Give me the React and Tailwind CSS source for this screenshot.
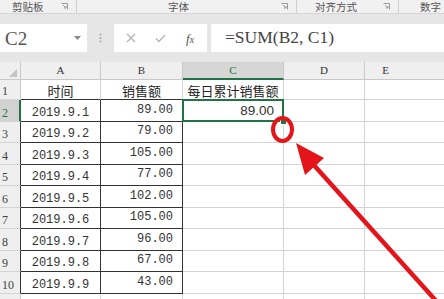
import React from "react";

const dates = ["2019.9.1","2019.9.2","2019.9.3","2019.9.4","2019.9.5","2019.9.6","2019.9.7","2019.9.8","2019.9.9"];
const sales = ["89.00","79.00","105.00","77.00","102.00","105.00","96.00","67.00","43.00"];
const heights = ["h-[22px]","h-[21px]","h-[22px]","h-[21px]","h-[22px]","h-[21px]","h-[22px]","h-[21px]","h-[22px]"];

const mono = { fontFamily: '"Liberation Mono", "Noto Sans CJK SC", monospace' };
const serif = { fontFamily: '"Liberation Serif", "Noto Sans CJK SC", serif' };
const cjk = { fontFamily: '"Noto Sans CJK SC", "Noto Sans", sans-serif' };
const sans = { fontFamily: '"Liberation Sans", Arial, sans-serif' };

function Launcher() {
  return (
    <svg width="7" height="7" viewBox="0 0 7 7" className="shrink-0">
      <path d="M0.5 0.5 H6.5 V6.5" fill="none" stroke="#9a9a9a" strokeWidth="1" />
      <path d="M2 2 L5 5 M5 3 V5 H3" fill="none" stroke="#9a9a9a" strokeWidth="1" />
    </svg>
  );
}

function RowHeader({ n, dark, selected }) {
  return (
    <div
      className={`w-[21px] shrink-0 h-full flex items-end pl-[2px] pb-[2px] text-[12px] leading-none border-b border-b-[#d4d4d4] ${
        selected ? "bg-[#d2d2d2] text-[#217346] border-r-2 border-r-[#217346]" : "bg-[#efefef] text-[#444]"
      } ${!selected && dark ? "border-r border-r-[#333]" : ""} ${!selected && !dark ? "border-r border-r-[#c8c8c8]" : ""}`}
      style={serif}
    >
      {n}
    </div>
  );
}

export default function App() {
  return (
    <div className="relative w-[444px] h-[299px] overflow-hidden bg-white select-none">
      {/* ribbon group labels */}
      <div className="h-[14px] bg-[#f1f1f1] border-b border-[#d6d6d6] flex items-center text-[10.5px] leading-[12px] text-[#555]" style={cjk}>
        <div className="w-[77px] shrink-0 flex items-center justify-between pl-[12px] pr-[8px] border-r border-[#cfcfcf] h-[13px]">
          <span>剪贴板</span>
          <Launcher />
        </div>
        <div className="w-[220px] shrink-0 flex items-center justify-between pl-[91px] pr-[8px] border-r border-[#cfcfcf] h-[13px]">
          <span>字体</span>
          <Launcher />
        </div>
        <div className="w-[102px] shrink-0 flex items-center justify-between pl-[18px] pr-[8px] border-r border-[#cfcfcf] h-[13px]">
          <span>对齐方式</span>
          <Launcher />
        </div>
        <div className="flex-1 pl-[21px] flex items-center h-[13px]">
          <span>数字</span>
        </div>
      </div>

      {/* formula bar area */}
      <div className="h-[48px] bg-[#e6e6e6] pt-[10px] flex items-start">
        <div className="w-[87px] h-[28px] bg-white flex items-center justify-between pl-[5px] pr-[6px]">
          <span className="text-[19px] leading-none text-[#555]" style={serif}>C2</span>
          <svg width="7" height="5" viewBox="0 0 7 5"><path d="M0 0 H7 L3.5 4 Z" fill="#888" /></svg>
        </div>
        <div className="w-[27px] h-[28px] flex items-center justify-center">
          <svg width="3" height="10" viewBox="0 0 3 10">
            <circle cx="1.5" cy="1.5" r="1" fill="#a8a8a8" />
            <circle cx="1.5" cy="5" r="1" fill="#a8a8a8" />
            <circle cx="1.5" cy="8.5" r="1" fill="#a8a8a8" />
          </svg>
        </div>
        <div className="w-[93px] h-[28px] bg-white flex items-center">
          <svg width="10" height="10" viewBox="0 0 10 10" className="ml-[12px]">
            <path d="M1 1 L9 9 M9 1 L1 9" stroke="#b4b4b4" strokeWidth="1.4" fill="none" />
          </svg>
          <svg width="11" height="9" viewBox="0 0 11 9" className="ml-[19px]">
            <path d="M1 4.5 L4 7.5 L10 1" stroke="#b4b4b4" strokeWidth="1.4" fill="none" />
          </svg>
          <span className="ml-[20px] text-[13px] italic text-[#555] leading-none" style={serif}>
            f<span className="text-[10px]">x</span>
          </span>
        </div>
        <div className="ml-[4px] flex-1 h-[28px] bg-white flex items-center pl-[14px]">
          <span className="text-[17.5px] leading-none text-[#444]" style={serif}>=SUM(B2, C1)</span>
        </div>
      </div>

      {/* column header row */}
      <div className="h-[18px] flex text-[11px] leading-none text-[#333]" style={serif}>
        <div className="w-[21px] shrink-0 bg-[#efefef] border-r border-b border-[#c8c8c8] relative">
          <svg width="8" height="8" viewBox="0 0 8 8" className="absolute right-[3px] bottom-[2px]">
            <path d="M8 0 V8 H0 Z" fill="#c4c4c4" />
          </svg>
        </div>
        <div className="w-[80px] shrink-0 bg-[#efefef] border-r border-b border-[#c8c8c8] flex items-center justify-center">A</div>
        <div className="w-[82px] shrink-0 bg-[#efefef] border-r border-b border-[#c8c8c8] flex items-center justify-center">B</div>
        <div className="w-[101px] shrink-0 bg-[#d6d6d6] border-r border-r-[#c8c8c8] border-b-2 border-b-[#217346] flex items-center justify-center text-[#217346]">C</div>
        <div className="w-[81px] shrink-0 bg-[#efefef] border-r border-b border-[#c8c8c8] flex items-center justify-center">D</div>
        <div className="flex-1 bg-[#efefef] border-b border-[#c8c8c8] flex items-center justify-center pr-[38px]">E</div>
      </div>

      {/* row 1 */}
      <div className="h-[20px] flex text-[13px] leading-none text-[#222]" style={cjk}>
        <RowHeader n="1" />
        <div className="w-[80px] shrink-0 border-r border-r-[#d4d4d4] border-b border-b-[#333] flex items-end justify-center pb-[2px]">时间</div>
        <div className="w-[82px] shrink-0 border-r border-r-[#d4d4d4] border-b border-b-[#333] flex items-end justify-center pb-[2px]">销售额</div>
        <div className="w-[101px] shrink-0 border-r border-b border-[#d4d4d4] flex items-end justify-center pb-[2px]">每日累计销售额</div>
        <div className="w-[81px] shrink-0 border-r border-b border-[#d4d4d4]"></div>
        <div className="flex-1 border-b border-[#d4d4d4]"></div>
      </div>

      {/* rows 2-10 */}
      {dates.map((d, i) => (
        <div key={d} className={`${heights[i]} flex text-[12px] leading-none text-[#333]`}>
          <RowHeader n={String(i + 2)} dark selected={i === 0} />
          <div className="w-[80px] shrink-0 border-r border-b border-[#333] flex items-end justify-center pb-[2px]" style={mono}>{d}</div>
          <div className="w-[82px] shrink-0 border-r border-b border-[#333] flex items-end justify-end pr-[9px] pb-[5px]" style={mono}>{sales[i]}</div>
          <div className="relative w-[101px] shrink-0 border-r border-b border-[#d4d4d4] flex items-end justify-end pr-[9px] pb-[4px]">
            {i === 0 && (
              <>
                <span className="text-[13.5px] text-[#333]" style={sans}>89.00</span>
                <div className="absolute -left-[1px] -top-[1px] -right-[1px] -bottom-[1px] border-2 border-[#217346] z-10"></div>
                <div className="absolute -right-[4px] -bottom-[4px] w-[7px] h-[7px] bg-[#217346] border border-white z-20"></div>
              </>
            )}
          </div>
          <div className="w-[81px] shrink-0 border-r border-b border-[#d4d4d4]"></div>
          <div className="flex-1 border-b border-[#d4d4d4]"></div>
        </div>
      ))}

      {/* row 11 (partial) */}
      <div className="h-[20px] flex">
        <RowHeader n="" />
        <div className="w-[80px] shrink-0 border-r border-[#d4d4d4]"></div>
        <div className="w-[82px] shrink-0 border-r border-[#d4d4d4]"></div>
        <div className="w-[101px] shrink-0 border-r border-[#d4d4d4]"></div>
        <div className="w-[81px] shrink-0 border-r border-[#d4d4d4]"></div>
        <div className="flex-1"></div>
      </div>

      {/* red annotation */}
      <svg className="absolute inset-0 pointer-events-none z-30" width="444" height="299" viewBox="0 0 444 299">
        <ellipse cx="282.5" cy="129.5" rx="9.5" ry="11.5" fill="none" stroke="#e3151a" strokeWidth="4" />
        <line x1="312" y1="163" x2="447" y2="313" stroke="#e3151a" strokeWidth="4.5" />
        <polygon points="296,143 324,158 305,175" fill="#e3151a" />
      </svg>
    </div>
  );
}
